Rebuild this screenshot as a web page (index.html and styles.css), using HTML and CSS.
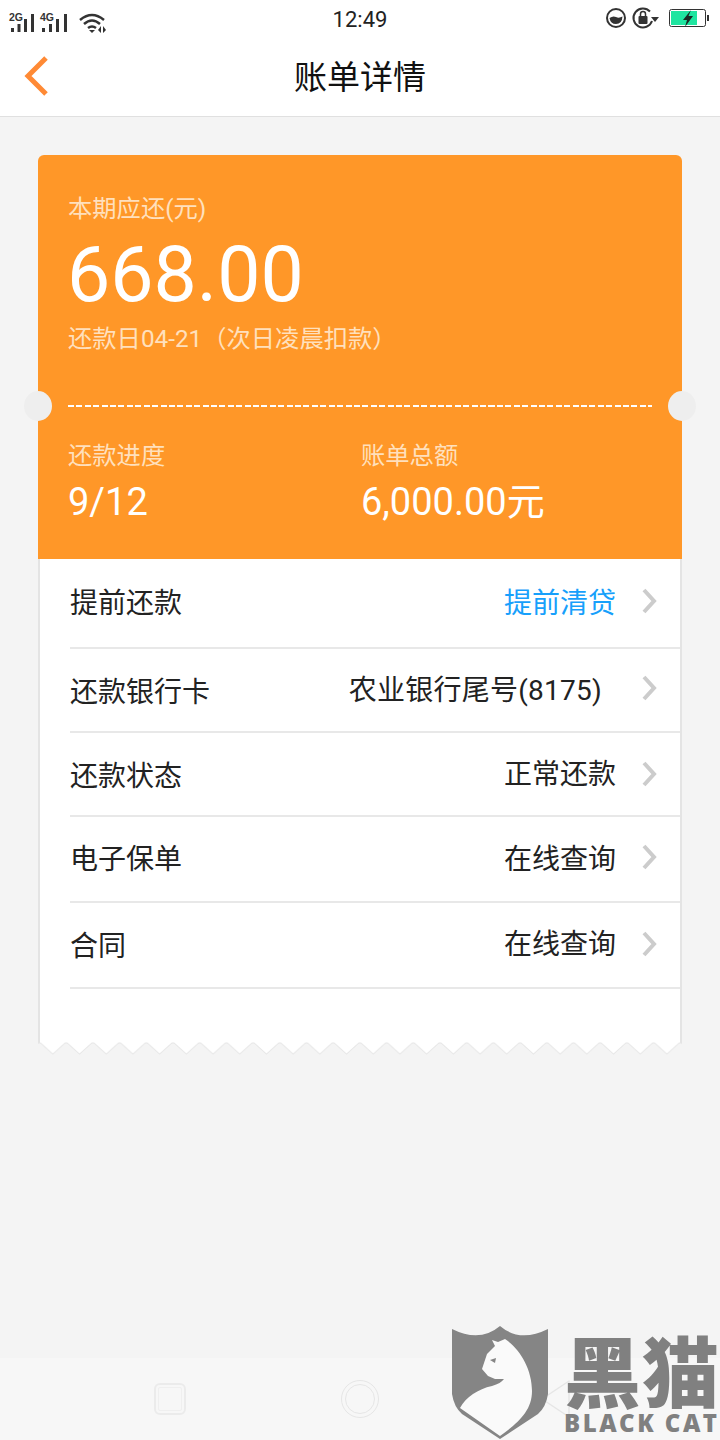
FILE: index.html
```html
<!DOCTYPE html>
<html lang="zh-CN">

<head>
    <meta charset="UTF-8">
    <meta name="viewport" content="width=device-width, initial-scale=1.0">
    <title>账单详情</title>
    <link rel="stylesheet" href="styles.css">
</head>

<body>
    <div class="status-bar">
        <svg class="status-left" width="110" height="30" viewBox="0 0 110 30">
            <text x="9" y="16" class="net-label">2G</text>
            <text x="40" y="16" class="net-label">4G</text>
            <g fill="#333">
                <rect x="11" y="23" width="3" height="4"/>
                <rect x="17.500" y="19" width="3" height="8"/>
                <rect x="24" y="14" width="3" height="13"/>
                <rect x="31" y="9" width="3" height="18"/>
                <rect x="42" y="23" width="3" height="4"/>
                <rect x="49" y="19" width="3" height="8"/>
                <rect x="56" y="14" width="3" height="13"/>
                <rect x="64" y="9" width="3" height="18"/>
            </g>
            <g fill="none" stroke="#333" stroke-width="2.500">
                <path d="M80 15 Q92 5 104 15"/>
                <path d="M84 19 Q92 12 100 19"/>
                <path d="M88 23 Q92 20 96 23"/>
            </g>
            <path d="M92 28 L89 25 H95 Z" fill="#333"/>
            <path d="M101 21 V28 L98 25 Z M103 21 V28 L106 25 Z" fill="#333"/>
        </svg>
        <span class="time">12:49</span>
        <svg class="status-right" width="106" height="40" viewBox="604 0 106 40">
            <circle cx="616" cy="18" r="9" fill="none" stroke="#333" stroke-width="2"/>
            <path d="M609.500 18 Q613 15.500 616 17 T622.500 16.500 Q622 24 616 24 Q610.500 24 609.500 18 Z" fill="#333"/>
            <path d="M650 11.500 A9.500 9.500 0 1 0 652 21" fill="none" stroke="#333" stroke-width="2"/>
            <path d="M651 17 H659 L655 22 Z" fill="#333"/>
            <rect x="638.500" y="16" width="9" height="8" rx="1" fill="#333"/>
            <path d="M640.500 16 V14 A2.500 2.500 0 0 1 645.500 14 V16" fill="none" stroke="#333" stroke-width="1.500"/>
            <rect x="669.500" y="9.500" width="36" height="17" rx="2" fill="#fff" stroke="#333"/>
            <rect x="671" y="11" width="26" height="14" fill="#1fe5a0"/>
            <rect x="707" y="15" width="2" height="6" fill="#333"/>
            <path d="M691 10 L683 20 H687 L685 27 L693 16 H688.500 Z" fill="#1a2a24"/>
        </svg>
    </div>

    <div class="header">
        <svg class="back" width="28" height="42" viewBox="0 0 28 42">
            <path d="M24 3 L6 21 L24 39" fill="none" stroke="#ff8a35" stroke-width="5"/>
        </svg>
        <h1>账单详情</h1>
    </div>

    <div class="main">
        <div class="bill">
            <div class="bill-top">
                <p class="label">本期应还(元)</p>
                <p class="amount">668.00</p>
                <p class="label">还款日04-21（次日凌晨扣款）</p>
            </div>
            <div class="tear">
                <span class="notch notch-left"></span>
                <span class="notch notch-right"></span>
            </div>
            <div class="bill-bottom">
                <div class="stat stat-progress">
                    <p class="label">还款进度</p>
                    <p class="stat-value">9/12</p>
                </div>
                <div class="stat">
                    <p class="label">账单总额</p>
                    <p class="stat-value">6,000.00元</p>
                </div>
            </div>
        </div>

        <div class="list">
            <div class="row row-1">
                <span>提前还款</span>
                <span class="row-value link">提前清贷</span>
                <svg class="chevron" width="16" height="26" viewBox="0 0 16 26"><path d="M3 2 L13 13 L3 24" /></svg>
            </div>
            <div class="row row-2">
                <span>还款银行卡</span>
                <span class="row-value bank">农业银行尾号(8175)</span>
                <svg class="chevron" width="16" height="26" viewBox="0 0 16 26"><path d="M3 2 L13 13 L3 24" /></svg>
            </div>
            <div class="row row-3">
                <span>还款状态</span>
                <span class="row-value">正常还款</span>
                <svg class="chevron" width="16" height="26" viewBox="0 0 16 26"><path d="M3 2 L13 13 L3 24" /></svg>
            </div>
            <div class="row row-4">
                <span>电子保单</span>
                <span class="row-value">在线查询</span>
                <svg class="chevron" width="16" height="26" viewBox="0 0 16 26"><path d="M3 2 L13 13 L3 24" /></svg>
            </div>
            <div class="row row-5">
                <span>合同</span>
                <span class="row-value">在线查询</span>
                <svg class="chevron" width="16" height="26" viewBox="0 0 16 26"><path d="M3 2 L13 13 L3 24" /></svg>
            </div>
            <div class="list-end"></div>
        </div>
        <svg class="teeth" width="644" height="13" viewBox="0 0 644 13">
            <defs>
                <pattern id="tooth" width="26.700" height="13" patternUnits="userSpaceOnUse" x="1.500">
                    <path d="M0 1 H1 L13.350 12 L25.700 1 H26.700" fill="#fff" stroke="#e6e6e6" stroke-width="1"/>
                </pattern>
            </defs>
            <rect width="644" height="13" fill="url(#tooth)"/>
        </svg>
    </div>

    <div class="nav-bar">
        <span class="nav-square"></span>
        <span class="nav-circle"></span>
        <svg class="nav-back" width="34" height="42" viewBox="0 0 34 42">
            <path d="M31 3 L4 21 L31 39 Z" fill="none" stroke="#e6e6e6" stroke-width="1.500" stroke-linejoin="round"/>
        </svg>
    </div>

    <div class="watermark">
        <svg class="shield" width="100" height="116" viewBox="20 13 100 116">
            <path d="M22 18 Q50 32 70 15 Q90 32 118 18 V83 Q116 96 108 103 L70 128 L32 103 Q24 96 22 83 Z" fill="#858585"/>
            <path d="M62 29 L68 31 L75 28 C90 38 102 58 102 80 C102 100 88 112 70 125 L30 97 C36 86 48 78 62 75 C68 73 72 71 74 68 L65 68 L58 65 L52 58 L57 43 L65 35 Z" fill="#fafafa"/>
            <path d="M60 49 L66 47 L65 52 Z" fill="#858585"/>
        </svg>
        <div class="mark-words">
            <span class="mark-cn">黑猫</span>
            <span class="mark-en">BLACK CAT</span>
        </div>
    </div>
</body>

</html>
```

FILE: styles.css
```css
* {
    margin: 0px;
    padding: 0px;
    box-sizing: border-box;
}

body {
    position: relative;
    display: flex;
    flex-direction: column;
    width: 720px;
    height: 1440px;
    overflow: hidden;
    font-family: Roboto, "Noto Sans CJK SC", sans-serif;
    background: #f4f4f4;
    color: #222;
}

.status-bar {
    position: relative;
    display: flex;
    justify-content: space-between;
    align-items: center;
    height: 40px;
    padding-right: 10px;
    background: #fff;
}

.status-bar .status-left {
    display: block;
}

.status-bar .time {
    position: absolute;
    left: 0;
    right: 0;
    top: 7px;
    text-align: center;
    font-size: 22px;
    color: #222;
}

.net-label {
    font-family: "Liberation Sans", sans-serif;
    font-size: 10.500px;
    font-weight: 700;
    fill: #333;
}

.header {
    position: relative;
    display: flex;
    justify-content: center;
    align-items: center;
    height: 77px;
    padding-bottom: 6px;
    background: #fff;
    border-bottom: 1px solid #e0e0e0;
}

.header h1 {
    font-size: 33px;
    font-weight: 400;
    color: #111;
}

.header .back {
    position: absolute;
    left: 22px;
    top: 15px;
}

.main {
    flex: 1;
    padding: 38px 38px 0;
}

.bill {
    background: #ff9728;
    border-radius: 6px 6px 0 0;
    color: #fff;
}

.label {
    font-size: 24.300px;
    line-height: 34px;
    color: #ffe0bd;
}

.bill-top {
    height: 250px;
    padding: 37px 30px 0;
}

.amount {
    font-size: 77px;
    line-height: 98px;
    margin: 0 0 -2px -1px;
    color: #fff;
}

.tear {
    position: relative;
    height: 2px;
    margin: 0 30px;
    background: repeating-linear-gradient(90deg, #fff 0 6px, transparent 6px 8.410px);
}

.notch {
    position: absolute;
    top: -14px;
    width: 28px;
    height: 30px;
    border-radius: 50%;
    background: #eee;
}

.notch-left {
    left: -44px;
}

.notch-right {
    right: -44px;
}

.bill-bottom {
    display: flex;
    height: 152px;
    padding: 32px 30px 0;
}

.stat-progress {
    width: 293px;
}

.stat-value {
    font-size: 38px;
    line-height: 58px;
    color: #fff;
}

.list {
    padding-left: 30px;
    background: #fff;
    border-left: 2px solid #e4e4e4;
    border-right: 2px solid #e4e4e4;
}

.row {
    display: flex;
    align-items: center;
    padding-right: 23px;
    font-size: 28px;
    color: #222;
    border-bottom: 2px solid #e8e8e8;
}

.row-1 {
    height: 90px;
    padding-bottom: 5px;
}

.row-2,
.row-3 {
    height: 84px;
}

.row-4,
.row-5 {
    height: 86px;
}

.row-4 {
    padding-bottom: 5px;
}

.row-5 {
    padding-bottom: 2px;
}

.row .row-value {
    margin-left: auto;
    margin-right: 25px;
}

.row-2 .row-value,
.row-3 .row-value,
.row-5 .row-value {
    margin-bottom: 4px;
}

.row-2 .chevron {
    margin-bottom: 4px;
}

.row .link {
    color: #17a0fb;
}

.row .bank {
    margin-right: 39px;
    letter-spacing: 0.250px;
}

.chevron path {
    fill: none;
    stroke: #ccc;
    stroke-width: 4;
}

.list-end {
    height: 54px;
}

.teeth {
    display: block;
    margin-top: -1px;
}

.nav-bar {
    display: flex;
    align-items: center;
    height: 82px;
    padding-left: 154px;
    background: #f7f7f7;
}

.nav-square {
    width: 32px;
    height: 32px;
    border: 2px solid #ebebeb;
    border-radius: 6px;
    outline: 1px solid #efefef;
    outline-offset: -5px;
}

.nav-circle {
    width: 38px;
    height: 38px;
    margin-left: 155px;
    border: 1px solid #e6e6e6;
    border-radius: 50%;
    outline: 1px solid #e6e6e6;
    outline-offset: -5px;
}

.nav-back {
    margin-left: 159px;
}

.watermark {
    position: absolute;
    left: 450px;
    top: 1324px;
    display: flex;
    gap: 14px;
}

.mark-words {
    display: flex;
    flex-direction: column;
    align-items: flex-start;
    color: #808080;
}

.mark-cn {
    margin-top: 8px;
    font-family: "Noto Sans CJK SC", sans-serif;
    font-size: 77px;
    font-weight: 900;
    line-height: 74px;
    letter-spacing: 1px;
}

.mark-en {
    margin-top: 4px;
    font-family: "Open Sans", sans-serif;
    font-size: 24px;
    font-weight: 800;
    line-height: 26px;
    letter-spacing: 2.500px;
    white-space: nowrap;
}
```
